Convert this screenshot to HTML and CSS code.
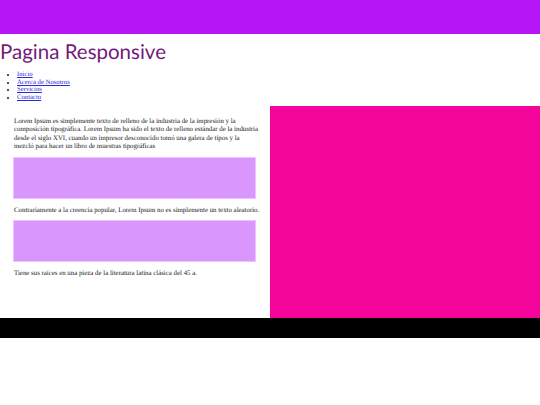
FILE: index.html
```html
<!DOCTYPE html>
<html lang="es">
<head>
<meta charset="utf-8">
<title>Pagina Responsive</title>
<link rel="stylesheet" href="styles.css">
</head>
<body>
<header class="top-bar"></header>
<h1 class="title">Pagina Responsive</h1>
<nav class="nav">
  <ul class="nav-list">
    <li><a href="#">Inicio</a></li>
    <li><a href="#">Acerca de Nosotros</a></li>
    <li><a href="#">Servicios</a></li>
    <li><a href="#">Contacto</a></li>
  </ul>
</nav>
<main class="main">
  <section class="content">
    <p class="text">Lorem Ipsum es simplemente texto de relleno de la industria de la impresión y la<br>composición tipográfica. Lorem Ipsum ha sido el texto de relleno estándar de la industria<br>desde el siglo XVI, cuando un impresor desconocido tomó una galera de tipos y la<br>mezcló para hacer un libro de muestras tipográficas</p>
    <div class="box"></div>
    <p class="text">Contrariamente a la creencia popular, Lorem Ipsum no es simplemente un texto aleatorio.</p>
    <div class="box"></div>
    <p class="text">Tiene sus raíces en una pieza de la literatura latina clásica del 45 a.</p>
  </section>
  <aside class="side"></aside>
</main>
<footer class="footer"></footer>
</body>
</html>
```
FILE: styles.css
```css
html, body {
  margin: 0;
  padding: 0;
  background: #ffffff;
}
body {
  font-family: "Liberation Serif", "Times New Roman", serif;
  color: #1a1a1a;
  text-rendering: geometricPrecision;
}
.top-bar {
  height: 34px;
  background: #b515f7;
}
.title {
  margin: 4px 0 0 0;
  font-family: "Comic Sans MS", "Lato", sans-serif;
  font-weight: 400;
  font-size: 20.5px;
  line-height: 28px;
  color: #731a78;
}
.nav-list {
  margin: 5px 0 0 0;
  padding-left: 17px;
  font-size: 6.7px;
  line-height: 7.7px;
}
.nav-list a {
  color: #2a2ad8;
}
.main {
  display: grid;
  grid-template-columns: 270px 270px;
  margin-top: 4px;
}
.content {
  padding: 12px 14px 0 13px;
  height: 200px;
}
.text {
  margin: 0 -4px 0 1px;
  font-size: 6.85px;
  line-height: 8.5px;
  white-space: nowrap;
}
.box {
  height: 40px;
  margin: 5px 0 8px 0;
  background: #d996fd;
  border: 1px solid #ecc4fd;
}
.side {
  background: #f5049b;
}
.footer {
  height: 20px;
  background: #000000;
}
```
